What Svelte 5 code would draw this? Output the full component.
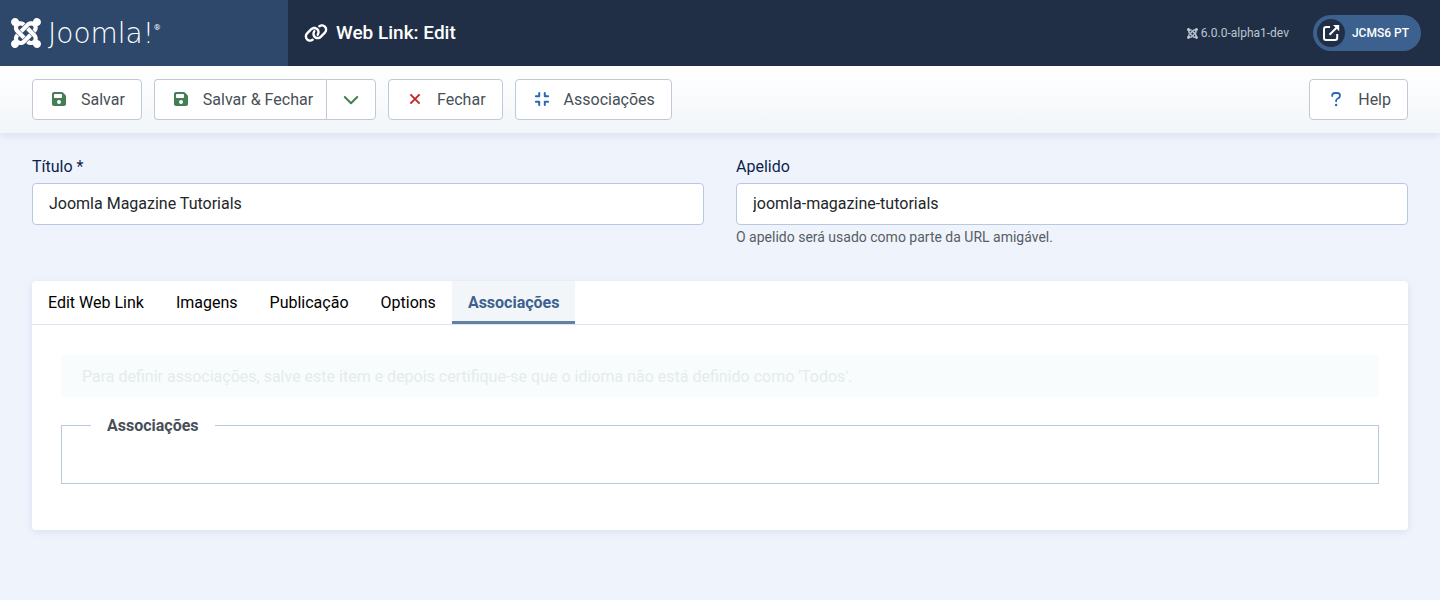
<script>
  const joomla =
    'M.6 92.1C.6 58.8 27.4 32 60.4 32c30 0 54.5 21.9 59.2 50.2 32.6-7.6 67.1.6 96.5 30l-44.3 44.3c-20.5-20.5-42.6-16.3-55.4-3.5-14.3 14.3-14.3 37.9 0 52.2l99.5 99.5-44 44.3c-87.7-87.2-49.7-49.7-99.8-99.7-26.8-26.5-35-64.8-24.8-98.9C20.4 144.6.6 120.7.6 92.1zm129.5 116.4l44.3 44.3c10-10 89.7-89.7 99.7-99.8 14.3-14.3 37.6-14.3 51.9 0 12.8 12.8 17 35-3.5 55.4l44 44.3c31.2-31.2 38.5-67.6 28.9-101.2 29.2-4.1 51.9-29.2 51.9-59.5 0-33.2-26.8-60.1-59.8-60.1-30.3 0-55.4 22.5-59.5 51.6-33.8-9.9-71.7-1.5-98.3 25.1-18.3 19.1-71.1 71.5-99.6 99.9zm266.3 152.2c8.2-32.7-.9-68.5-26.3-93.9-11.8-12.2 5 4.7-99.5-99.7l-44.3 44.3 99.7 99.7c14.3 14.3 14.3 37.6 0 51.9-12.8 12.8-35 17-55.4-3.5l-44 44.3c27.6 30.2 68 38.8 102.7 28 5.5 27.4 29.7 48.1 58.9 48.1 33 0 59.8-26.8 59.8-60.1 0-30.2-22.5-55-51.6-59.1zm-84.3-53.1l-44-44.3c-87 86.4-50.4 50.4-99.7 99.8-14.3 14.3-37.6 14.3-51.9 0-13.1-13.4-16.9-35.3 3.2-55.4l-44-44.3c-30.2 30.2-38 65.2-29.5 98.3-26.7 6-46.2 29.9-46.2 58.2C0 453.2 26.8 480 59.8 480c28.6 0 52.5-19.8 58.6-46.7 32.7 8.2 68.5-.6 94.2-26 32.1-32 12.2-12.4 99.5-99.7z';
  const tabs = ['Edit Web Link', 'Imagens', 'Publicação', 'Options', 'Associações'];
  let active = $state('Associações');
  let title = $state('Joomla Magazine Tutorials');
  let alias = $state('joomla-magazine-tutorials');
</script>

{#snippet saveIcon()}
  <svg class="icon green" viewBox="0 0 448 512" aria-hidden="true">
    <path fill="currentColor" d="M64 32C28.7 32 0 60.7 0 96V416c0 35.3 28.7 64 64 64H384c35.3 0 64-28.7 64-64V173.3c0-17-6.7-33.3-18.7-45.3L352 50.7C340 38.7 323.7 32 306.7 32H64zm0 96c0-17.7 14.3-32 32-32H288c17.7 0 32 14.3 32 32v64c0 17.7-14.3 32-32 32H96c-17.7 0-32-14.3-32-32V128zM224 288a64 64 0 1 1 0 128 64 64 0 1 1 0-128z" />
  </svg>
{/snippet}

<header>
  <a class="brand" href="#home" aria-label="Joomla!">
    <svg viewBox="0 32 448 448" aria-hidden="true"><path fill="currentColor" d={joomla} /></svg>
    <span class="wordmark">Joomla!</span><span class="reg">®</span>
  </a>
  <div class="bar">
    <h1>
      <svg viewBox="0 0 640 512" aria-hidden="true">
        <path fill="currentColor" d="M579.8 267.7c56.5-56.5 56.5-148 0-204.5c-50-50-128.8-56.5-186.3-15.4l-1.6 1.1c-14.4 10.3-17.7 30.3-7.4 44.6s30.3 17.7 44.6 7.4l1.6-1.1c32.1-22.9 76-19.3 103.8 8.6c31.5 31.5 31.5 82.5 0 114L422.3 334.8c-31.5 31.5-82.5 31.5-114 0c-27.9-27.9-31.5-71.8-8.6-103.8l1.1-1.6c10.3-14.4 6.9-34.4-7.4-44.6s-34.4-6.9-44.6 7.4l-1.1 1.6C206.5 251.2 213 330 263 380c56.5 56.5 148 56.5 204.5 0L579.8 267.7zM60.2 244.3c-56.5 56.5-56.5 148 0 204.5c50 50 128.8 56.5 186.3 15.4l1.6-1.1c14.4-10.3 17.7-30.3 7.4-44.6s-30.3-17.7-44.6-7.4l-1.6 1.1c-32.1 22.9-76 19.3-103.8-8.6C74 372 74 321 105.5 289.5L217.7 177.2c31.5-31.5 82.5-31.5 114 0c27.9 27.9 31.5 71.8 8.6 103.9l-1.1 1.6c-10.3 14.4-6.9 34.4 7.4 44.6s34.4 6.9 44.6-7.4l1.1-1.6C433.5 260.8 427 182 377 132c-56.5-56.5-148-56.5-204.5 0L60.2 244.3z" />
      </svg>
      Web Link: Edit
    </h1>
    <span class="version">
      <svg viewBox="0 32 448 448" aria-hidden="true"><path fill="currentColor" d={joomla} /></svg>
      6.0.0-alpha1-dev
    </span>
    <a class="site" href="#site">
      <span class="disc">
        <svg viewBox="0 0 18 18" aria-hidden="true">
          <path fill="none" stroke="currentColor" stroke-width="2" d="M8 3H4.2Q2 3 2 5.200V14Q2 16 4 16H13Q15.200 16 15.200 14V10" />
          <path fill="none" stroke="currentColor" stroke-width="2" d="M7.500 10.800L14.500 3.800" />
          <path fill="currentColor" d="M11 1H17.200V7.200Z" />
        </svg>
      </span>
      JCMS6 PT
    </a>
  </div>
</header>

<div class="toolbar" role="toolbar" aria-label="Toolbar">
  <button class="btn" type="button">{@render saveIcon()}Salvar</button>
  <div class="group">
    <button class="btn" type="button">{@render saveIcon()}Salvar &amp; Fechar</button>
    <button class="btn toggle" type="button" aria-label="Mais opções">
      <svg class="icon green" viewBox="0 0 16 16" aria-hidden="true">
        <path fill="none" stroke="currentColor" stroke-width="2" stroke-linecap="round" stroke-linejoin="round" d="M1.800 5L8 11.200L14.200 5" />
      </svg>
    </button>
  </div>
  <button class="btn" type="button">
    <svg class="icon red" viewBox="0 0 16 16" aria-hidden="true">
      <path fill="none" stroke="currentColor" stroke-width="2" d="M3.400 3.400L12.600 12.600M12.600 3.400L3.400 12.600" />
    </svg>Fechar
  </button>
  <button class="btn" type="button">
    <svg class="icon blue" viewBox="0 0 16 16" aria-hidden="true">
      <path fill="none" stroke="currentColor" stroke-width="2" stroke-linecap="round" stroke-linejoin="round" d="M1.900 5.200H5.200V1.900M10.800 1.900V5.200H14.100M1.900 10.800H5.200V14.100M10.800 14.100V10.800H14.100" />
    </svg>Associações
  </button>
  <button class="btn help" type="button">
    <svg class="icon blue" viewBox="0 0 16 16" aria-hidden="true">
      <path fill="none" stroke="currentColor" stroke-width="1.800" stroke-linecap="round" stroke-linejoin="round" d="M4.200 5V4.600Q4.200 2 6.800 2H9.300Q12 2 12 4.600Q12 6.400 10.300 7.300Q8.100 8.400 8.100 9.600V10.300" />
      <circle cx="8.100" cy="14" r="1.200" fill="currentColor" />
    </svg>Help
  </button>
</div>

<main>
  <div class="fields">
    <div class="field">
      <label for="title">Título *</label>
      <input id="title" type="text" bind:value={title} />
    </div>
    <div class="field">
      <label for="alias">Apelido</label>
      <input id="alias" type="text" bind:value={alias} aria-describedby="alias-note" />
      <small id="alias-note">O apelido será usado como parte da URL amigável.</small>
    </div>
  </div>

  <section class="card">
    <div class="tabs" role="tablist">
      {#each tabs as tab}
        <button type="button" role="tab" aria-selected={active === tab} class:active={active === tab} onclick={() => (active = tab)}>{tab}</button>
      {/each}
    </div>
    <div class="panel" role="tabpanel">
      <p class="notice">Para definir associações, salve este item e depois certifique-se que o idioma não está definido como 'Todos'.</p>
      <fieldset>
        <legend>Associações</legend>
      </fieldset>
    </div>
  </section>
</main>

<style>
  :global(body) {
    margin: 0;
    background: #eff4fc;
    font-family: Roboto, 'Liberation Sans', sans-serif;
    font-size: 16px;
    line-height: 24px;
    color: #22262a;
  }
  header,
  header *,
  .toolbar,
  .toolbar *,
  main,
  main * {
    box-sizing: border-box;
  }
  header {
    display: flex;
    min-height: 66px;
    color: #fff;
    background: #212f46;
  }
  .brand {
    display: flex;
    flex: 0 0 20%;
    align-items: center;
    padding: 0 11px;
    color: inherit;
    text-decoration: none;
    background: #2e486b;
  }
  .brand svg {
    width: 30px;
    height: 30px;
    margin-right: 7px;
  }
  .wordmark {
    padding-top: 2px;
    font-family: 'DejaVu Sans', sans-serif;
    font-size: 28px;
    font-weight: 200;
    line-height: 32px;
  }
  .reg {
    align-self: flex-start;
    padding-top: 22px;
    font-size: 8px;
    line-height: 12px;
  }
  .bar {
    display: flex;
    flex: 1;
    align-items: center;
    padding: 0 19px 0 16px;
  }
  h1 {
    display: flex;
    align-items: center;
    gap: 8px;
    margin: 0 auto 0 0;
    font-size: 19px;
    font-weight: 500;
  }
  h1 svg {
    width: 24px;
    height: 20px;
  }
  .version {
    display: flex;
    align-items: center;
    gap: 3px;
    margin-right: 24px;
    font-size: 12px;
    color: #bcc6d3;
  }
  .version svg {
    width: 11px;
    height: 11px;
  }
  .site {
    display: flex;
    align-items: center;
    gap: 7px;
    height: 36px;
    padding: 0 12px 0 4px;
    border-radius: 18px;
    font-size: 12px;
    font-weight: 500;
    color: #fff;
    text-decoration: none;
    background: #3d618f;
  }
  .disc {
    display: grid;
    place-items: center;
    width: 28px;
    height: 28px;
    border-radius: 50%;
    background: #212f46;
  }
  .disc svg {
    width: 18px;
    height: 18px;
  }
  .toolbar {
    display: flex;
    flex-wrap: wrap;
    gap: 12px;
    padding: 13px 32px;
    background: linear-gradient(#fff, #f2f6f9);
    box-shadow: 0 3px 8px rgba(20, 60, 140, 0.1);
  }
  .btn {
    display: flex;
    align-items: center;
    height: 41px;
    padding: 0 16px 0 18px;
    border: 1px solid #c2c9d6;
    border-radius: 4px;
    font: inherit;
    color: #484f56;
    background: #fff;
  }
  .icon {
    width: 16px;
    height: 16px;
    margin: 0 14px 1px 0;
  }
  .green {
    color: #457d54;
  }
  .red {
    color: #c62828;
  }
  .blue {
    color: #2a69b8;
  }
  .group {
    display: flex;
  }
  .group .btn:first-child {
    padding-right: 13px;
    border-right: 0;
    border-radius: 4px 0 0 4px;
  }
  .group .toggle {
    padding: 0 16px;
    border-radius: 0 4px 4px 0;
  }
  .toggle .icon {
    margin: 0;
  }
  .help {
    margin-left: auto;
  }
  main {
    padding: 22px 32px 70px;
  }
  .fields {
    display: grid;
    grid-template-columns: 1fr 1fr;
    gap: 32px;
  }
  .field {
    display: flex;
    flex-direction: column;
  }
  label {
    margin-bottom: 4px;
    color: #0b1f50;
  }
  input {
    width: 100%;
    height: 42px;
    padding: 0 16px 2px;
    border: 1px solid #b8c8e2;
    border-radius: 4px;
    font: inherit;
    color: #22262a;
    background: #fff;
  }
  small {
    font-size: 14px;
    color: #575d63;
  }
  .card {
    margin-top: 32px;
    border-radius: 4px;
    background: #fff;
    box-shadow: 0 2px 8px rgba(20, 60, 140, 0.1);
  }
  .tabs {
    display: flex;
    border-bottom: 1px solid #dbe3f1;
  }
  .tabs button {
    height: 43px;
    padding: 0 16px;
    border: 0;
    font: inherit;
    color: #000;
    background: none;
  }
  .tabs button:first-child {
    border-radius: 4px 0 0 0;
  }
  .tabs .active {
    font-weight: 700;
    color: #3d618f;
    background: #f2f6f9;
    box-shadow: inset 0 -3px #6480a7;
  }
  .panel {
    padding: 30px 29px 46px;
  }
  .notice {
    margin: 0 0 15px;
    padding: 10px 21px 8px;
    border-radius: 4px;
    color: #e4eceb;
    background: #f8fcfd;
  }
  fieldset {
    min-width: 0;
    min-height: 72px;
    margin: 0;
    padding: 0 29px;
    border: 1px solid #b8c8e0;
  }
  legend {
    padding: 2px 16px 0;
    font-weight: 700;
    color: #484f56;
  }
</style>
